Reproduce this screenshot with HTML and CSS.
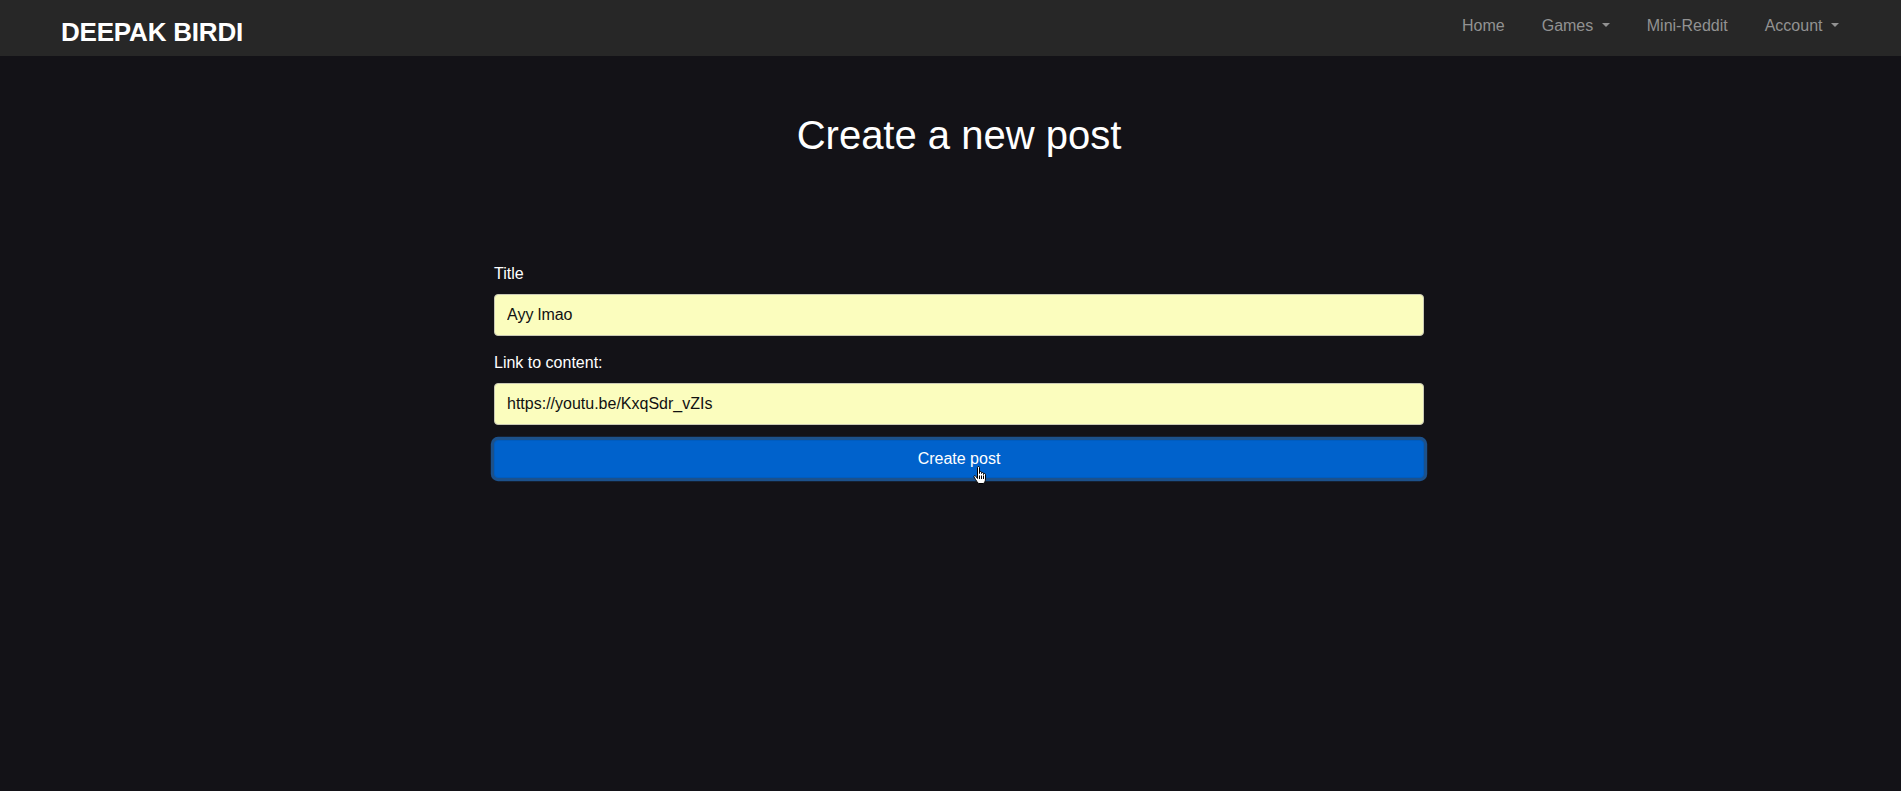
FILE: index.html
```html
<!DOCTYPE html>
<html lang="en">
<head>
<meta charset="utf-8">
<title>Create a new post</title>
<link rel="stylesheet" href="styles.css">
</head>
<body>
<nav class="navbar">
  <a class="brand" href="#">DEEPAK BIRDI</a>
  <ul class="nav-links">
    <li><a href="#">Home</a></li>
    <li><a href="#" class="dropdown">Games</a></li>
    <li><a href="#">Mini-Reddit</a></li>
    <li><a href="#" class="dropdown">Account</a></li>
  </ul>
</nav>
<main class="main">
  <div class="content">
    <h1 class="page-title">Create a new post</h1>
    <form class="post-form">
      <label class="field-label" for="title">Title</label>
      <input class="field-input" id="title" type="text" value="Ayy lmao">
      <label class="field-label second" for="link">Link to content:</label>
      <input class="field-input" id="link" type="text" value="https://youtu.be/KxqSdr_vZIs">
      <div class="btn-wrap">
        <button type="button" class="btn-primary">Create post</button>
        <svg class="cursor" width="17" height="19" viewBox="0 0 17 19" xmlns="http://www.w3.org/2000/svg">
          <path d="M4.5 1.5 C4.5 0.9 5 0.5 5.5 0.5 C6 0.5 6.5 0.9 6.5 1.5 L6.5 7.5 L6.5 6.5 C6.5 5.9 7 5.5 7.5 5.5 C8 5.5 8.5 5.9 8.5 6.5 L8.5 7.5 C8.5 6.9 9 6.5 9.5 6.5 C10 6.5 10.5 6.9 10.5 7.5 L10.5 8.5 C10.5 7.9 11 7.5 11.5 7.5 C12 7.5 12.5 7.9 12.5 8.5 L12.5 13 C12.5 15 11.5 16.5 10.5 17.5 L5.5 17.5 C4.5 16.5 3.5 15 2.5 13.5 L1 11 C0.7 10.4 1 9.8 1.6 9.7 C2.2 9.6 2.7 10 3 10.5 L4.5 12.5 Z" fill="#ffffff" stroke="#000000" stroke-width="1" stroke-linejoin="round"/>
          <path d="M6.5 9.5 L6.5 13 M8.5 9.5 L8.5 13 M10.5 9.5 L10.5 13" stroke="#000000" stroke-width="1"/>
        </svg>
      </div>
    </form>
  </div>
</main>
</body>
</html>
```

FILE: styles.css
```css
* { box-sizing: border-box; }

html, body {
  margin: 0;
  padding: 0;
}

body {
  background: #131217;
  color: #ffffff;
  font-family: "Liberation Sans", Arial, sans-serif;
  font-size: 16px;
  line-height: 24px;
  min-height: 791px;
}

.navbar {
  height: 56px;
  background: #272727;
  display: flex;
  justify-content: space-between;
  align-items: flex-start;
  padding: 0 62px 0 61px;
}

.brand {
  display: block;
  padding-top: 17px;
  font-size: 26px;
  line-height: 30px;
  font-weight: bold;
  letter-spacing: -0.2px;
  color: #ffffff;
  text-decoration: none;
}

.nav-links {
  list-style: none;
  margin: 0;
  padding: 14px 0 0 0;
  display: flex;
  gap: 37px;
}

.nav-links a {
  color: #929292;
  text-decoration: none;
  font-size: 16px;
  line-height: 24px;
}

.nav-links a.dropdown::after {
  content: "";
  display: inline-block;
  margin-left: 8.5px;
  vertical-align: 0.255em;
  border-top: 0.3em solid #929292;
  border-right: 0.3em solid transparent;
  border-left: 0.3em solid transparent;
  border-bottom: 0;
}

.main {
  display: flex;
  justify-content: center;
  padding-left: 17px;
}

.content {
  width: 930px;
}

.page-title {
  margin: 55px 0 0 0;
  font-size: 40px;
  line-height: 48px;
  font-weight: normal;
  text-align: center;
  color: #ffffff;
}

.post-form {
  display: flex;
  flex-direction: column;
  margin-top: 103px;
}

.field-label {
  display: block;
  font-size: 16px;
  line-height: 24px;
  color: #ffffff;
  margin-bottom: 8px;
}

.field-label.second {
  margin-top: 15px;
}

.field-input {
  display: block;
  width: 100%;
  height: 42px;
  padding: 0 12px;
  font-family: "Liberation Sans", Arial, sans-serif;
  font-size: 16px;
  color: #111111;
  background: #fbfdbe;
  border: 1px solid #c9c9b4;
  border-radius: 4px;
  outline: none;
}

.btn-wrap {
  position: relative;
  margin-top: 15px;
}

.btn-primary {
  display: block;
  width: 100%;
  height: 38px;
  font-family: "Liberation Sans", Arial, sans-serif;
  font-size: 16px;
  line-height: 24px;
  color: #ffffff;
  background: #0062cc;
  border: 1px solid #005cbf;
  border-radius: 4px;
  box-shadow: 0 0 0 3.2px rgba(38, 143, 255, 0.5);
  padding: 6px 12px;
}

.cursor {
  position: absolute;
  left: 479px;
  top: 26px;
}
```
